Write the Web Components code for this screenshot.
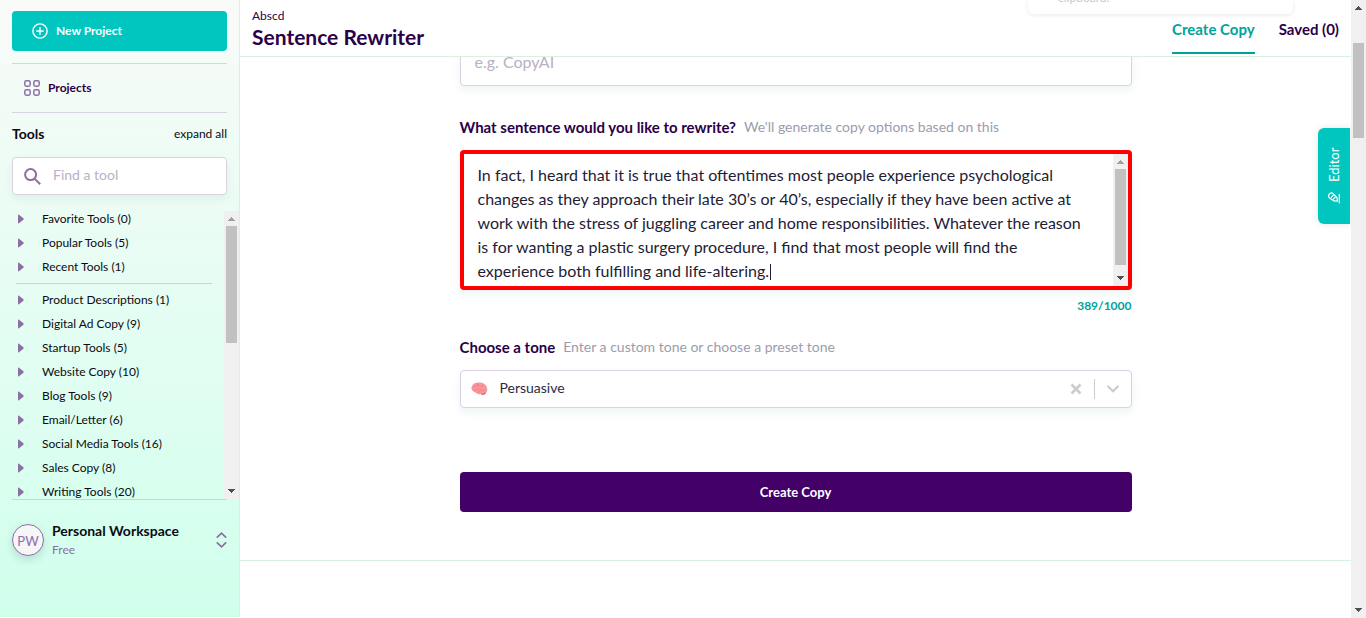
<!DOCTYPE html>
<html lang="en">
<head>
<meta charset="utf-8">
<meta name="viewport" content="width=device-width, initial-scale=1">
<title>Sentence Rewriter</title>
<style>
  :root {
    --teal: #00c6bf;
    --teal-dark: #00a39b;
    --ink: #2b0048;
    --plum: #430067;
    --mauve: #8c6fa5;
    --line: #dcd0e6;
    --mint: #d8f0e0;
    --shadow: 0 4px 8px rgba(20, 120, 110, .08);
    font-family: Lato, "Liberation Sans", sans-serif;
    font-size: 14px;
    line-height: 20px;
    color: #0b0b12;
  }
  body { margin: 0; }
</style>
</head>
<body>
<app-shell>
  <side-bar slot="side">
    <tool-item>Favorite Tools (0)</tool-item>
    <tool-item>Popular Tools (5)</tool-item>
    <tool-item>Recent Tools (1)</tool-item>
    <hr-line></hr-line>
    <tool-item>Product Descriptions (1)</tool-item>
    <tool-item>Digital Ad Copy (9)</tool-item>
    <tool-item>Startup Tools (5)</tool-item>
    <tool-item>Website Copy (10)</tool-item>
    <tool-item>Blog Tools (9)</tool-item>
    <tool-item>Email/Letter (6)</tool-item>
    <tool-item>Social Media Tools (16)</tool-item>
    <tool-item>Sales Copy (8)</tool-item>
    <tool-item>Writing Tools (20)</tool-item>
  </side-bar>
  <page-header slot="header"></page-header>
  <copy-form slot="form"></copy-form>
  <toast-note slot="over">clipboard.</toast-note>
  <editor-tab slot="over">Editor</editor-tab>
  <scroll-bar slot="bar" style="--before: 28; --thumb: 95; --after: 465" class="page"></scroll-bar>
</app-shell>

<script>
function define(name, html, setup) {
  const template = document.createElement('template');
  template.innerHTML = '<style>*, :host{box-sizing:border-box} button,input,textarea,select{font:inherit;color:inherit;margin:0} button{cursor:pointer} svg{display:block;flex:none}</style>' + html;
  customElements.define(name, class extends HTMLElement {
    constructor() {
      super();
      this.attachShadow({ mode: 'open' }).append(template.content.cloneNode(true));
      if (setup) setup(this);
    }
  });
}

define('scroll-bar', `
<style>
  :host { display: flex; flex-direction: column; width: 15px; flex: none; background: #f0f0f0; --up: #a0a0a0; }
  :host(.page) { --up: #505050; }
  svg { width: 15px; height: 15px; }
  .thumb { flex: var(--thumb) 1 0; background: #c1c1c1; margin: 0 2px; }
  .before { flex: var(--before) 1 0; }
  .after { flex: var(--after) 1 0; }
</style>
<svg viewBox="0 0 15 15" shape-rendering="crispEdges"><path d="M7 6h1v1h1v1h1v1h1v1H4V9h1V8h1V7h1z" fill="var(--up)"/></svg>
<div class="before"></div><div class="thumb"></div><div class="after"></div>
<svg viewBox="0 0 15 15" shape-rendering="crispEdges"><path d="M4 5h7v1h-1v1H9v1H8v1H7v-1H6V7H5V6H4z" fill="#505050"/></svg>`);

define('hr-line', `
<style>:host { display: block; height: 1px; background: #d6cde0; margin: 4px 12px 4px 4px; }</style>`);

define('tool-item', `
<style>
  :host { display: block; }
  button { display: flex; align-items: center; gap: 18px; width: 100%; height: 24px; padding: 0 0 0 6px; border: 0; background: none; font-size: 12px; line-height: 24px; text-align: left; white-space: nowrap; }
</style>
<button type="button"><svg width="6" height="10" viewBox="0 0 6 10"><path d="M0 1.2Q0 .2 1 .8L5.4 4.3Q6 5 5.4 5.7L1 9.3Q0 9.8 0 8.8z" fill="var(--mauve)"/></svg><span><slot></slot></span></button>`);

define('side-bar', `
<style>
  :host { display: flex; flex-direction: column; min-height: 0; padding: 11px 0 0 12px; background: linear-gradient(#f9fbf9, #d0ffec); border-right: 1px solid #dbeee6; }
  .block { margin-right: 12px; flex: none; }
  .new { display: flex; align-items: center; gap: 8px; height: 40px; padding: 0 20px; border: 0; border-radius: 4px; background: var(--teal); color: #fff; font-size: 12px; font-weight: 700; }
  .projects { display: flex; align-items: center; gap: 8px; height: 50px; margin-top: 12px; padding: 0 12px; border: 1px solid var(--line); border-width: 1px 0; color: var(--ink); font-size: 12px; font-weight: 700; text-decoration: none; }
  .heading { display: flex; justify-content: space-between; align-items: center; height: 44px; padding-bottom: 2px; }
  h2 { margin: 0; font-size: 14px; font-weight: 700; }
  .heading button { border: 0; padding: 0; background: none; font-size: 12px; }
  .search { display: flex; align-items: center; gap: 12px; height: 38px; padding: 0 11px; background: #fff; border: 1px solid var(--line); border-radius: 4px; box-shadow: var(--shadow); }
  input { flex: 1; min-width: 0; padding: 0 0 2px; border: 0; outline: 0; background: none; }
  input::placeholder { color: #bbb0c8; opacity: 1; }
  .list { display: flex; height: 292px; margin-top: 12px; overflow: hidden; }
  nav { flex: 1; min-width: 0; }
  scroll-bar { margin-top: 4px; }
  .user { display: flex; align-items: center; gap: 8px; padding: 21px 0; border-top: 1px solid #cfd3dc; }
  .avatar { width: 32px; height: 32px; flex: none; border: 1px solid var(--mauve); border-radius: 50%; background: #f6f5f8; color: var(--mauve); text-align: center; line-height: 32px; font-size: 13px; box-shadow: 0 4px 8px rgba(60, 80, 100, .18); }
  .who { flex: 1; }
  .who b { display: block; line-height: 20px; }
  .who span { display: block; font-size: 12px; line-height: 18px; color: var(--mauve); }
</style>
<button class="block new" type="button"><svg width="16" height="16" viewBox="0 0 16 16" fill="none" stroke="#fff" stroke-width="1.4" stroke-linecap="round"><circle cx="8" cy="8" r="7.1"/><path d="M8 4.8v6.4M4.8 8h6.4"/></svg>New Project</button>
<a class="block projects" href="#projects"><svg width="16" height="16" viewBox="0 0 16 16" fill="none" stroke="var(--mauve)" stroke-width="1.5"><rect x=".8" y=".8" width="5.4" height="5.4" rx="1.6"/><rect x="9.8" y=".8" width="5.4" height="5.4" rx="1.6"/><rect x=".8" y="9.8" width="5.4" height="5.4" rx="1.6"/><rect x="9.8" y="9.8" width="5.4" height="5.4" rx="1.6"/></svg>Projects</a>
<div class="block heading"><h2>Tools</h2><button type="button">expand all</button></div>
<label class="block search"><svg width="17" height="17" viewBox="0 0 17 17" fill="none" stroke="var(--mauve)" stroke-width="2"><circle cx="6.6" cy="6.6" r="5.5"/><path d="M10.6 10.6l5.6 5.6"/></svg><input type="search" placeholder="Find a tool" aria-label="Find a tool"></label>
<div class="list"><nav><slot></slot></nav><scroll-bar style="--before: 0; --thumb: 117; --after: 141"></scroll-bar></div>
<div class="block user"><div class="avatar">PW</div><div class="who"><b>Personal Workspace</b><span>Free</span></div><svg width="11" height="16" viewBox="0 0 11 16" fill="none" stroke="var(--mauve)" stroke-width="1.7"><path d="M.8 5.6L5.5 1.2l4.7 4.4M.8 10.4l4.7 4.4 4.7-4.4"/></svg></div>`);

define('page-header', `
<style>
  :host { display: flex; justify-content: space-between; position: relative; height: 57px; padding: 0 12px; background: #fff; border-bottom: 1px solid var(--mint); color: var(--ink); }
  p { margin: 8px 0 0; font-size: 12px; line-height: 16px; }
  h1 { margin: 0; font-size: 21px; line-height: 26px; }
  nav { display: flex; gap: 24px; align-items: flex-start; }
  a { height: 54px; padding-top: 19px; color: inherit; font-size: 15px; font-weight: 700; text-decoration: none; }
  a.on { color: var(--teal-dark); border-bottom: 2px solid var(--teal-dark); }
</style>
<div><p>Abscd</p><h1>Sentence Rewriter</h1></div>
<nav><a class="on" href="#create">Create Copy</a><a href="#saved">Saved (0)</a></nav>`);

define('copy-form', `
<style>
  :host { display: flow-root; padding: 0 16px 48px; border-bottom: 1px solid var(--mint); }
  form { max-width: 672px; margin: -9px auto 0; }
  .name { display: block; width: 100%; height: 38px; padding: 0 14px 12px; font-size: 16px; }
  .name, .pick { background: #fff; border: 1px solid var(--line); border-radius: 4px; box-shadow: var(--shadow); outline: 0; }
  .name::placeholder { color: #b9b0c4; opacity: 1; }
  .row { display: flex; gap: 8px; align-items: center; line-height: 20px; }
  .row label { color: var(--ink); font-size: 15px; font-weight: 700; }
  .row span { color: #9c9cad; }
  .box { position: relative; display: flex; height: 140px; margin-top: 13px; border: 4px solid #f00; border-radius: 4px; box-shadow: var(--shadow); }
  textarea { flex: 1; min-width: 0; padding: 9px 0 0 14px; border: 0; outline: 0; resize: none; overflow: hidden; background: none; color: #231c35; font-size: 16px; line-height: 24px; white-space: pre; }
  .caret { position: absolute; left: 306px; top: 110px; width: 1px; height: 16px; background: #231c35; }
  output { display: block; margin-top: 8px; font-size: 12px; line-height: 16px; font-weight: 700; color: var(--teal-dark); text-align: right; }
  .pick { display: flex; align-items: center; height: 38px; margin-top: 13px; padding: 0 12px 0 10px; }
  select { flex: 1; appearance: none; border: 0; outline: 0; padding: 0 12px 2px; height: 36px; background: none; color: #2e2940; }
  .clear { display: flex; padding: 0; border: 0; background: none; }
  .rule { width: 1px; height: 20px; margin: 0 12px; background: #ccc; }
  .go { display: block; width: 100%; height: 40px; margin-top: 64px; border: 0; border-radius: 4px; background: var(--plum); color: #fff; font-size: 13px; font-weight: 700; }
</style>
<form>
  <input class="name" placeholder="e.g. CopyAI" aria-label="Name">
  <div class="row" style="margin-top:31px"><label for="text">What sentence would you like to rewrite?</label><span>We'll generate copy options based on this</span></div>
  <div class="box"><textarea id="text" spellcheck="false">In fact, I heard that it is true that oftentimes most people experience psychological
changes as they approach their late 30’s or 40’s, especially if they have been active at
work with the stress of juggling career and home responsibilities. Whatever the reason
is for wanting a plastic surgery procedure, I find that most people will find the
experience both fulfilling and life-altering.</textarea><i class="caret"></i><scroll-bar style="--before: 0; --thumb: 96; --after: 6"></scroll-bar></div>
  <output for="text">389/1000</output>
  <div class="row" style="margin-top:23px"><label for="tone">Choose a tone</label><span>Enter a custom tone or choose a preset tone</span></div>
  <div class="pick">
    <svg width="17" height="14" viewBox="0 0 17 14"><path d="M1 4C2 1.5 5 .4 8 .6c4 0 7.400 2 8 5.400.8 2-.2 4.500-2 5.400-.6 1.700-3 2-4.200.9C7 12.300 5.500 11.700 4.400 10.500 1.500 10-.6 7 1 4z" fill="#f8969a"/><path d="M10 11.800c2 .2 3.600-.6 5.200-2-.4 3-3.400 3.800-5.200 2z" fill="#d95f70"/><path d="M2.500 5.500c1-2 2-.2 3-1.600s2-1.500 3 0 2.500-1 4 .4M3 8c1.500-1.500 2.500.5 4-.6s2.600-.6 3 .8 2.500.6 4-.8M6 2.300l1.500.7M11 2.800l1.500 1M7 10l2-.5" fill="none" stroke="#e9707e" stroke-width=".5"/></svg>
    <select id="tone"><option>Persuasive</option></select>
    <button class="clear" type="button" aria-label="Clear"><svg width="12" height="12" viewBox="0 0 12 12" fill="none" stroke="#ccc" stroke-width="2.600"><path d="M1.500 1.500l9 9M10.500 1.500l-9 9"/></svg></button>
    <i class="rule"></i>
    <svg width="12" height="8" viewBox="0 0 12 8" fill="none" stroke="#ccc" stroke-width="2.200" stroke-linecap="round"><path d="M1.200 1.500L6 6.200l4.800-4.700"/></svg>
  </div>
  <button class="go" type="button">Create Copy</button>
</form>`);

define('toast-note', `
<style>
  :host { position: absolute; top: 0; right: 58px; width: 265px; height: 14px; overflow: visible; border-radius: 0 0 6px 6px; background: #fff; box-shadow: 0 1px 5px rgba(0, 0, 0, .09); }
  div { height: 14px; overflow: hidden; padding-left: 30px; color: #c9c9c9; font-size: 12px; }
  p { margin: 0; line-height: 20px; position: relative; top: -12px; }
</style>
<div><p><slot></slot></p></div>`);

define('editor-tab', `
<style>
  :host { position: absolute; top: 128px; right: 1px; }
  button { display: flex; align-items: center; justify-content: center; gap: 10px; width: 32px; height: 96px; padding: 0; border: 0; border-radius: 0 6px 6px 0; background: var(--teal); color: #fff; font-size: 13px; line-height: 32px; writing-mode: vertical-rl; transform: rotate(180deg); box-shadow: 0 0 8px rgba(0, 90, 80, .12); }
  svg { transform: rotate(180deg); }
</style>
<button type="button"><svg width="12" height="12" viewBox="0 0 12 12" fill="none" stroke="#fff" stroke-width="1.200"><path d="M1 5.400C.4 4.200.6 2.600 1.600 1.700s2.400-1 3.200-.2L9 5.800l.4 3.400-3.400-.3L2 6.200zM3 5.600l2.800-3M5 7.400l2.800-2.800M11.300 2v9.400"/></svg><span><slot></slot></span></button>`);

define('app-shell', `
<style>
  :host { display: grid; grid-template-columns: 240px minmax(0, 1fr) auto; height: 100vh; overflow: hidden; background: #fff; }
  main { position: relative; min-width: 0; overflow: hidden; }
  .side { display: grid; grid-template-columns: minmax(0, 1fr); min-height: 0; padding-bottom: 1px; }
  .bar { display: flex; }
</style>
<div class="side"><slot name="side"></slot></div>
<main><slot name="header"></slot><slot name="form"></slot><slot name="over"></slot></main>
<div class="bar"><slot name="bar"></slot></div>`);
</script>
</body>
</html>
